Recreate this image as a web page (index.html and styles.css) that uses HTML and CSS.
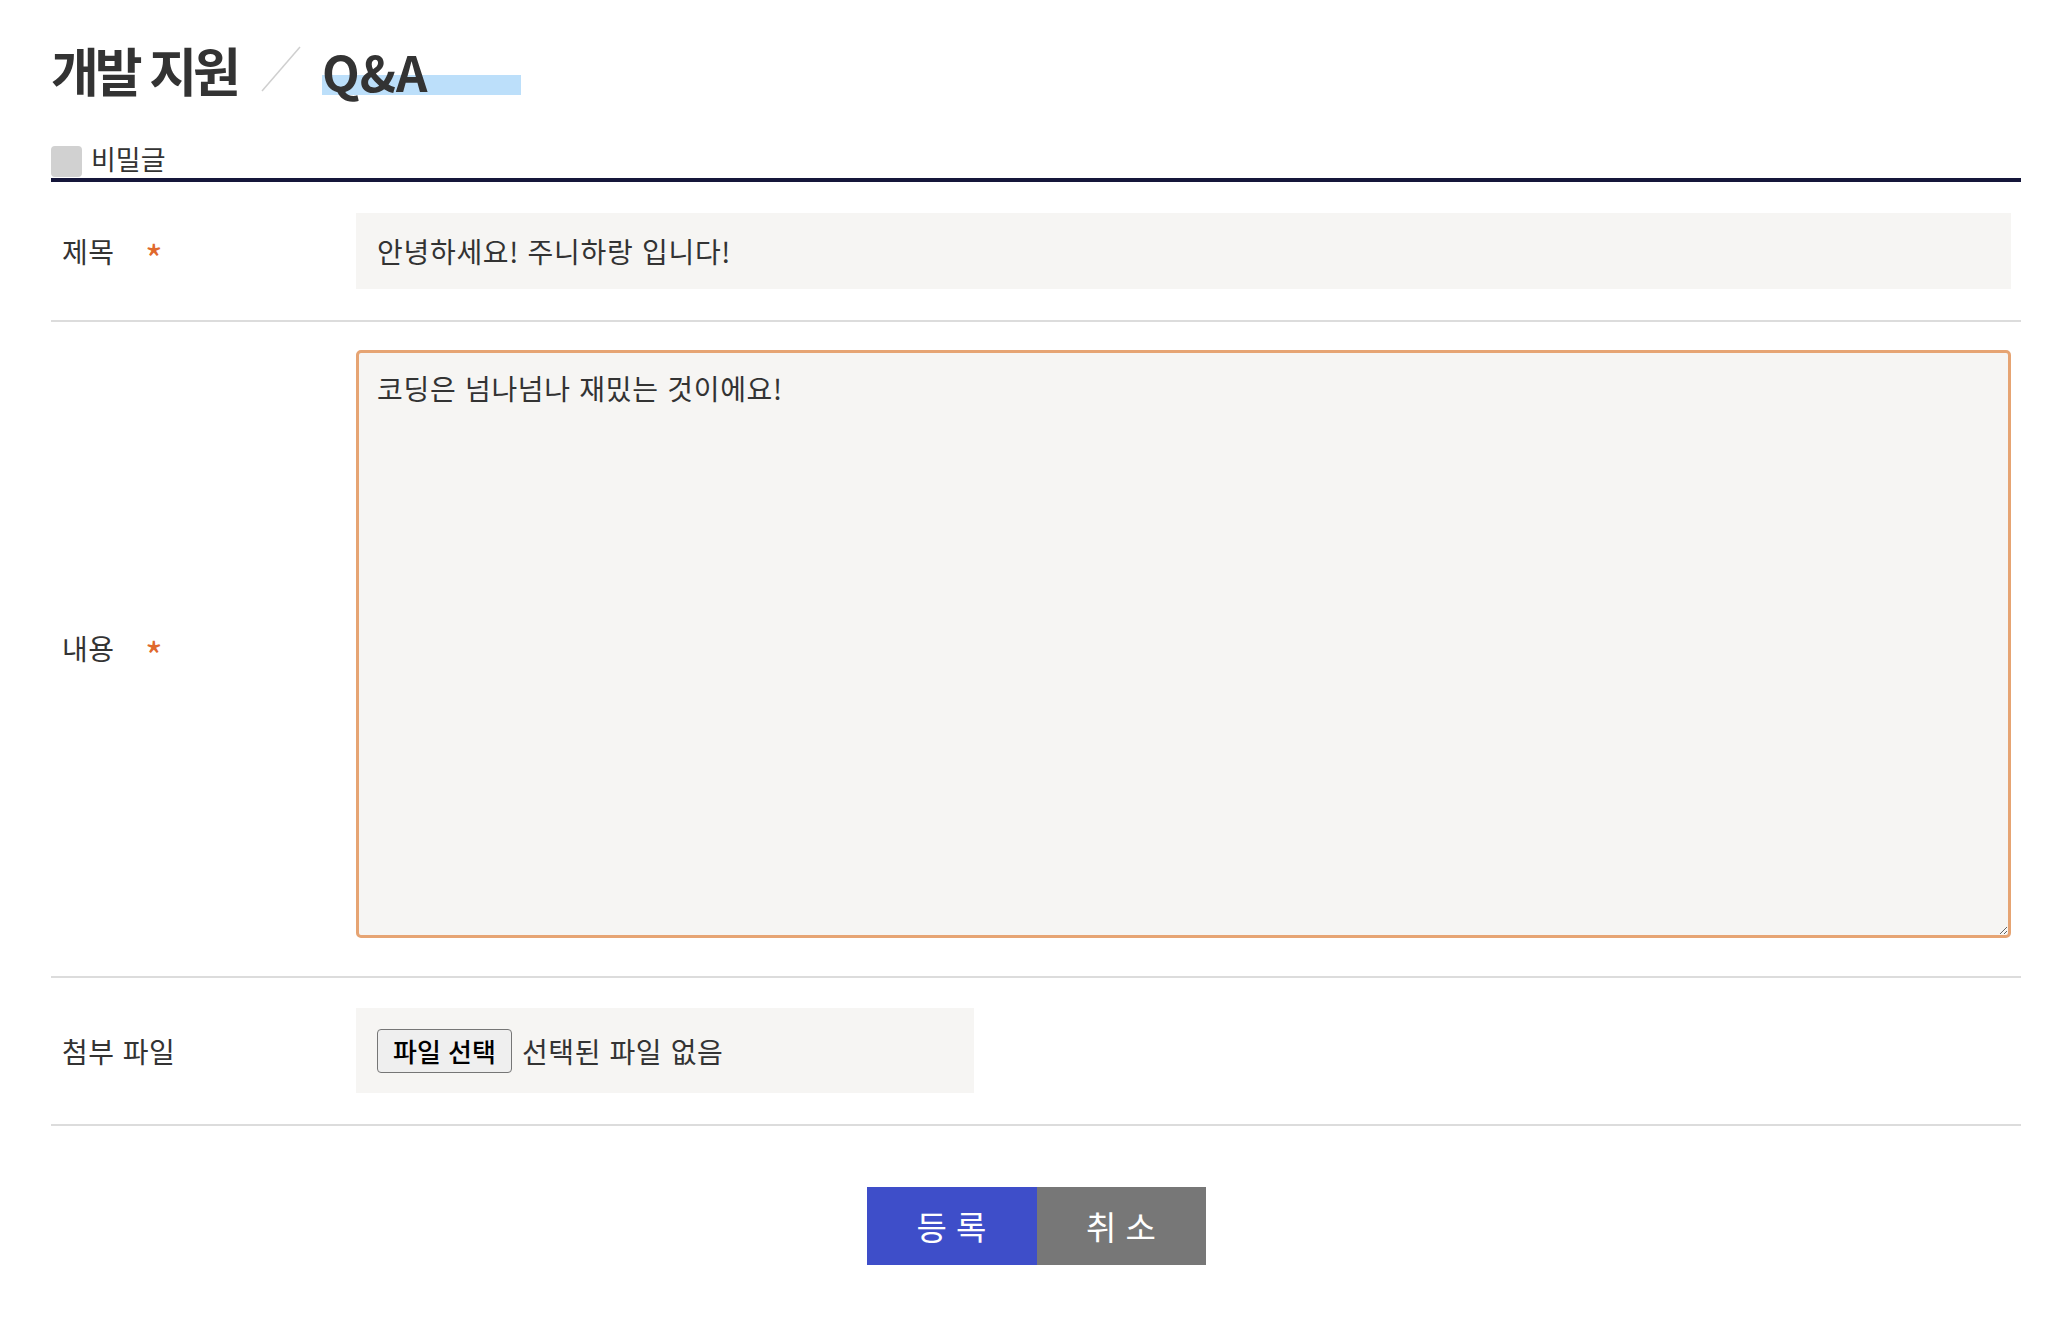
FILE: index.html
```html
<!DOCTYPE html>
<html lang="ko">

<head>
    <meta charset="utf-8">
    <title>개발 지원 - Q&amp;A</title>
    <link rel="stylesheet" href="styles.css">
</head>

<body>
    <div class="board-write">
        <!-- page title -->
        <div class="page-title">
            <h2>개발 지원</h2>
            <svg class="title-slash" width="40" height="46" viewBox="0 0 40 46" xmlns="http://www.w3.org/2000/svg">
                <line x1="1" y1="45" x2="39" y2="1" stroke="#cfcfcf" stroke-width="1.5" />
            </svg>
            <h3 class="title-sub">Q&amp;A</h3>
        </div>

        <div class="secret-check">
            <span class="check-box"></span>
            <label>비밀글</label>
        </div>

        <div class="write-table">
            <div class="form-row form-row--title">
                <div class="form-label">제목 <span class="required">*</span></div>
                <div class="form-field">
                    <input type="text" class="text-input" value="안녕하세요! 주니하랑 입니다!">
                </div>
            </div>
            <div class="form-row form-row--content">
                <div class="form-label">내용 <span class="required">*</span></div>
                <div class="form-field">
                    <textarea class="text-area">코딩은 넘나넘나 재밌는 것이에요!</textarea>
                </div>
            </div>
            <div class="form-row">
                <div class="form-label">첨부 파일</div>
                <div class="form-field">
                    <div class="file-box">
                        <label class="file-btn">파일 선택</label>
                        <span class="file-name">선택된 파일 없음</span>
                    </div>
                </div>
            </div>
        </div>

        <div class="btn-area">
            <button class="btn btn-submit">등 록</button>
            <button class="btn btn-cancel">취 소</button>
        </div>
    </div>
</body>

</html>
```

FILE: styles.css
```css
* {
    margin: 0;
    padding: 0;
    box-sizing: border-box;
}

body {
    font-family: "Noto Sans CJK KR", "Noto Sans", sans-serif;
    color: #333;
    background: #fff;
}

input,
button,
textarea {
    font: inherit;
}

.board-write {
    width: 1970px;
    margin-left: 51px;
    padding-top: 44px;
}

/* title */
.page-title {
    display: flex;
    align-items: baseline;
}

.page-title h2 {
    font-size: 52px;
    line-height: 1;
    font-weight: 700;
    letter-spacing: -4px;
    color: #333;
}

.title-slash {
    margin-left: 24px;
    margin-right: 21px;
}

.title-sub {
    display: inline-block;
    width: 199px;
    font-size: 49px;
    line-height: 1;
    font-weight: 700;
    color: #333;
    background: linear-gradient(to bottom, transparent 60%, #bcdffa 60%);
}

/* secret check */
.secret-check {
    display: flex;
    align-items: center;
    gap: 9px;
    margin-top: 50px;
    padding-bottom: 1px;
}

.check-box {
    width: 31px;
    height: 31px;
    border-radius: 4px;
    background: #d1d1d1;
}

.secret-check label {
    font-size: 27px;
    line-height: 31px;
    margin-top: -6px;
}

/* form table */
.write-table {
    border-top: 4px solid #15163a;
}

.form-row {
    display: grid;
    grid-template-columns: 305px 1fr;
    align-items: center;
    padding: 30px 10px 31px 0;
    border-bottom: 2px solid #dcdcdc;
}

.form-row--title {
    padding-top: 31px;
}

.form-row--content {
    padding-top: 28px;
    padding-bottom: 30px;
}

.form-label {
    padding-left: 11px;
    font-size: 28px;
    line-height: 40px;
    letter-spacing: 0.5px;
    color: #333;
}

.required {
    margin-left: 22px;
    color: #e0692c;
    font-size: 38px;
    line-height: 0;
    vertical-align: -11px;
}

.text-input {
    display: block;
    width: 100%;
    height: 76px;
    padding: 0 21px;
    border: none;
    background: #f6f5f3;
    font-size: 28px;
    letter-spacing: 0.7px;
    color: #333;
}

.text-area {
    display: block;
    width: 100%;
    height: 588px;
    margin-bottom: 8px;
    padding: 15px 18px;
    border: 3px solid #e6a473;
    border-radius: 5px;
    background: #f6f5f3;
    font-size: 28px;
    line-height: 40px;
    letter-spacing: 0.7px;
    color: #333;
    outline: none;
}

.file-box {
    display: flex;
    align-items: center;
    width: 618px;
    height: 85px;
    padding-left: 21px;
    background: #f6f5f3;
}

.file-btn {
    display: flex;
    align-items: center;
    height: 44px;
    padding: 0 15px;
    border: 1.5px solid #767676;
    border-radius: 4px;
    background: #efefef;
    font-size: 26px;
    font-weight: 500;
    color: #000;
}

.file-name {
    margin-left: 10px;
    font-size: 28px;
    letter-spacing: 0.6px;
    color: #333;
}

/* buttons */
.btn-area {
    display: flex;
    justify-content: center;
    margin-top: 61px;
}

.btn {
    width: 170px;
    height: 78px;
    border: none;
    font-size: 33px;
    color: #fff;
    cursor: pointer;
}

.btn-submit {
    background: #3e4ec9;
}

.btn-cancel {
    width: 169px;
    background: #777;
}
```
